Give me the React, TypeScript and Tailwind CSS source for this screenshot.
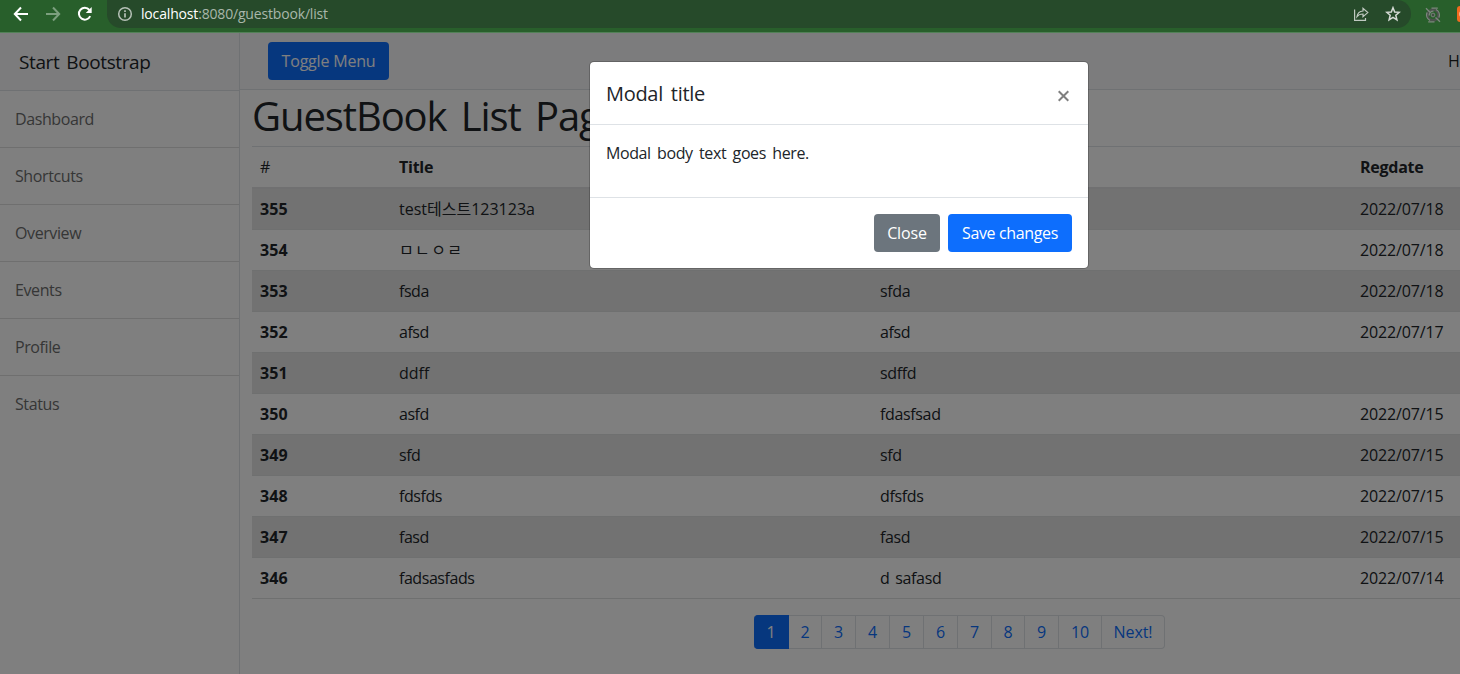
const MENU = ["Dashboard", "Shortcuts", "Overview", "Events", "Profile", "Status"];

type Entry = { gno: number; title: string; writer: string; regdate: string; titleClass?: string };

const ENTRIES: Entry[] = [
  { gno: 355, title: "test테스트123123a", writer: "", regdate: "2022/07/18", titleClass: "tracking-normal" },
  { gno: 354, title: "ㅁㄴㅇㄹ", writer: "", regdate: "2022/07/18", titleClass: "tracking-[1.4px]" },
  { gno: 353, title: "fsda", writer: "sfda", regdate: "2022/07/18" },
  { gno: 352, title: "afsd", writer: "afsd", regdate: "2022/07/17" },
  { gno: 351, title: "ddff", writer: "sdffd", regdate: "", titleClass: "tracking-normal" },
  { gno: 350, title: "asfd", writer: "fdasfsad", regdate: "2022/07/15" },
  { gno: 349, title: "sfd", writer: "sfd", regdate: "2022/07/15" },
  { gno: 348, title: "fdsfds", writer: "dfsfds", regdate: "2022/07/15" },
  { gno: 347, title: "fasd", writer: "fasd", regdate: "2022/07/15" },
  { gno: 346, title: "fadsasfads", writer: "d safasd", regdate: "2022/07/14" },
];

const PAGES = [
  { label: "1", width: "w-[35px]" },
  { label: "2", width: "w-[33px]" },
  { label: "3", width: "w-[34px]" },
  { label: "4", width: "w-[34px]" },
  { label: "5", width: "w-[34px]" },
  { label: "6", width: "w-[34px]" },
  { label: "7", width: "w-[34px]" },
  { label: "8", width: "w-[33px]" },
  { label: "9", width: "w-[34px]" },
  { label: "10", width: "w-[43px]" },
  { label: "Next!", width: "w-[63px]" },
];

const GRID = "grid grid-cols-[139px_481px_480px_481px]";

function BrowserBar() {
  return (
    <div className="flex h-8 shrink-0 items-start overflow-hidden bg-[#285f2b] text-white">
      <div className="flex h-7 w-[107px] shrink-0 items-center">
        <svg className="ml-[13px] h-4 w-4 shrink-0" viewBox="0 0 16 16" fill="none" stroke="currentColor" strokeWidth="2">
          <path d="M15 8H2.5M8 1.5 1.8 8 8 14.5" />
        </svg>
        <svg className="ml-4 h-4 w-4 shrink-0 text-[#7c9f7e]" viewBox="0 0 16 16" fill="none" stroke="currentColor" strokeWidth="2">
          <path d="M1 8h12.5M8 1.5 14.2 8 8 14.5" />
        </svg>
        <svg className="ml-4 h-4 w-4 shrink-0" viewBox="0 0 16 16" fill="none" stroke="currentColor" strokeWidth="2">
          <path d="M13.2 10.2A5.9 5.9 0 1 1 12.4 4" />
          <path d="M14.7 1v6H8.8z" fill="currentColor" stroke="none" />
        </svg>
      </div>
      <div className="flex h-7 w-[1304px] shrink-0 items-center rounded-r-full rounded-bl-full rounded-tl-2xl bg-[#264a2a]">
        <svg className="ml-[10px] h-4 w-4 shrink-0 text-[#b6c1b7]" viewBox="0 0 16 16" fill="none" stroke="currentColor" strokeWidth="1.5">
          <circle cx="8" cy="8" r="6.3" />
          <path d="M8 7.2v4.3M8 4.3v1.6" strokeWidth="1.7" />
        </svg>
        <span className="ml-2 text-[14px] leading-5 tracking-[-0.17px] text-[#a9b7aa]">
          <span className="text-white">localhost</span>:8080/guestbook/list
        </span>
        <svg className="ml-auto h-4 w-4 text-[#c0c9c1]" viewBox="0 0 16 16" fill="none" stroke="currentColor" strokeWidth="1.2">
          <path d="M1.6 3.5v10.9h10.9v-2.5" />
          <path d="M4 10.6C4.5 6.8 6.8 5.3 10 5V2.3l4.8 4.3-4.8 4.2V8C7.5 8 5.5 8.6 4 10.6z" />
        </svg>
        <svg className="ml-4 mr-[10px] h-4 w-4 text-[#d5dad5]" viewBox="0 0 16 16" fill="none" stroke="currentColor" strokeWidth="1.5">
          <path d="m8 1.7 1.7 4.3 4.6.3-3.5 3 1.1 4.5L8 11.3l-3.9 2.5 1.1-4.5-3.5-3L6.3 6z" />
        </svg>
      </div>
      <svg className="ml-[14px] mt-[7px] h-4 w-4 shrink-0 text-[#7d877e]" viewBox="0 0 16 16" fill="none" stroke="currentColor" strokeWidth="1.3">
        <circle cx="8" cy="8" r="5.4" stroke="#4b524c" strokeWidth="2.6" />
        <path d="M6.5 1.1H12.8M9.5 14.9H3.2M2 5.5A6.5 6.5 0 0 0 5 13.5M14 10.500A6.500 6.500 0 0 0 11 2.500M4.200 8.500A4 4 0 0 1 8.500 4.200" />
        <path d="m1 1.2 4.500 4.500M10.500 10.500l4.500 4.300" />
        <circle cx="8" cy="8" r="1.9" fill="#424c43" strokeWidth="0.9" />
      </svg>
      <div className="ml-4 mt-[6px] flex h-4 w-4 shrink-0 items-center rounded-[3px] bg-[#f26a1f] pl-[2px]">
        <div className="h-[6px] w-2 rounded-sm bg-[#f8b48c]" />
      </div>
    </div>
  );
}

function Sidebar() {
  return (
    <aside className="w-60 shrink-0 border-r border-[#dee2e6] bg-white">
      <div className="h-[58px] border-b border-[#dee2e6] bg-[#f8f9fa] pl-[19px] pt-[14px] text-[19px] leading-[30px] tracking-[-0.4px] [word-spacing:2.5px]">
        Start Bootstrap
      </div>
      <nav>
        {MENU.map((item) => (
          <a key={item} className="block h-[57px] border-b border-[#dfdfdf] py-4 pl-[15px] text-base leading-6 tracking-[-0.4px] text-[#6c6d6d] last:border-b-0">
            {item}
          </a>
        ))}
      </nav>
    </aside>
  );
}

function GuestbookTable() {
  return (
    <div className="w-[1581px] border-t border-[#dee2e6]">
      <div className={`${GRID} h-[42px] border-b-2 border-[#e0e1e2] font-bold leading-[41px]`}>
        {["#", "Title", "Writer", "Regdate"].map((h) => (
          <span key={h} className="px-2 tracking-[-0.25px] first:font-medium">{h}</span>
        ))}
      </div>
      {ENTRIES.map((e) => (
        <div key={e.gno} className={`${GRID} h-[41px] border-b border-[#dfe0e1] leading-10 odd:bg-white even:bg-[#e5e5e5]`}>
          <span className="px-2 font-bold tracking-[0.1px]">{e.gno}</span>
          <span className={`px-2 ${e.titleClass ?? "tracking-[-0.45px]"}`}>{e.title}</span>
          <span className="px-2">{e.writer}</span>
          <span className="px-2 tracking-[-0.15px]">{e.regdate}</span>
        </div>
      ))}
    </div>
  );
}

function Pagination() {
  return (
    <ul className="ml-[502px] mt-4 flex h-[34px] text-base leading-8 text-[#0d6efd]">
      {PAGES.map((p) => (
        <li
          key={p.label}
          className={`${p.width} shrink-0 border-y border-r border-[#dee2e6] text-center tracking-[-0.1px] first:rounded-l first:border-[#0d6efd] first:bg-[#0d6efd] first:text-white last:rounded-r`}
        >
          {p.label}
        </li>
      ))}
    </ul>
  );
}

function Modal() {
  return (
    <div className="absolute left-[589px] top-7 w-[500px] rounded-[5px] border border-black/20 bg-white bg-clip-padding">
      <div className="flex h-[63px] items-center justify-between border-b border-[#dee2e6] px-4">
        <h5 className="pt-[2px] text-[20px] leading-[30px] tracking-[-0.3px] [word-spacing:3px]">Modal title</h5>
        <button className="mr-[2px] mt-[5px] text-[#7f7f7f]">
          <svg className="h-3 w-3" viewBox="0 0 12 12" fill="none" stroke="currentColor" strokeWidth="2">
            <path d="m.7 1.2 9.6 9.6M10.3 1.2.7 10.8" />
          </svg>
        </button>
      </div>
      <div className="h-[72px] p-4">
        <p className="tracking-[-0.4px] [word-spacing:2.6px]">Modal body text goes here.</p>
      </div>
      <div className="flex justify-end gap-2 border-t border-[#dee2e6] p-4 text-white">
        <button className="h-[38px] w-[66px] rounded bg-[#6c757d] tracking-[-0.15px]">Close</button>
        <button className="h-[38px] w-[124px] rounded bg-[#0d6efd]">Save changes</button>
      </div>
    </div>
  );
}

export default function App() {
  return (
    <div className="flex h-[674px] w-[1460px] flex-col overflow-hidden bg-white font-['Open_Sans','Noto_Sans_CJK_KR',sans-serif] text-base leading-6 tracking-[-0.35px] text-[#212529] [word-spacing:2px]">
      <BrowserBar />
      <div className="h-px shrink-0 bg-[#528157]" />
      <div className="relative flex min-h-0 flex-1 overflow-hidden">
        <Sidebar />
        <main className="w-[1620px] shrink-0">
          <header className="flex h-[57px] items-center border-b border-[#dee2e6] bg-[#f8f9fa] pl-7">
            <button className="h-[38px] w-[121px] rounded bg-[#0d6efd] tracking-[-0.2px] text-white">Toggle Menu</button>
            <a className="ml-[1059px] text-black/90">Home</a>
          </header>
          <div className="pl-3">
            <h1 className="mb-2 h-12 whitespace-nowrap text-[40px] leading-[51px] tracking-[-1.1px] [word-spacing:5px]">GuestBook List Page</h1>
            <GuestbookTable />
            <Pagination />
          </div>
        </main>
        <div className="absolute inset-0 bg-black/50" />
        <Modal />
      </div>
    </div>
  );
}
